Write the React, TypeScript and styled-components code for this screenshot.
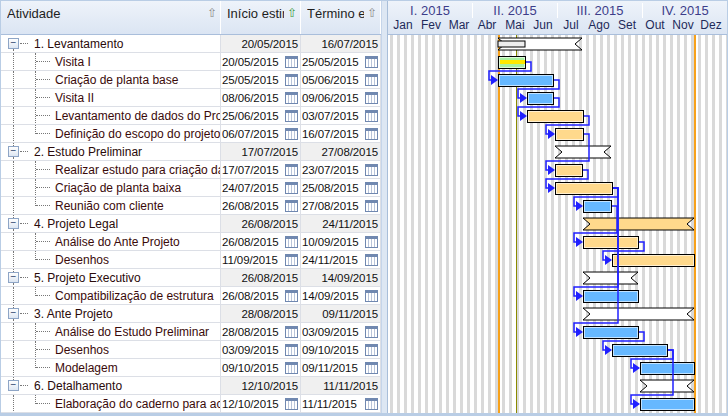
import React from "react";
import styled, { createGlobalStyle } from "styled-components";

const G = createGlobalStyle`
  body { margin: 0; font-family: "Liberation Sans", Arial, sans-serif; background: #fff; }
`;

type Row = { name: string; s: string; e: string; lvl: 0 | 1; last?: boolean; x1: number; x2: number; kind: "sum" | "blue" | "orange" | "green" };

const rows: Row[] = [
  { name: "1. Levantamento", s: "20/05/2015", e: "16/07/2015", lvl: 0, x1: 498, x2: 582, kind: "sum" },
  { name: "Visita I", s: "20/05/2015", e: "25/05/2015", lvl: 1, x1: 498, x2: 525, kind: "green" },
  { name: "Criação de planta base", s: "25/05/2015", e: "05/06/2015", lvl: 1, x1: 498, x2: 553, kind: "blue" },
  { name: "Visita II", s: "08/06/2015", e: "09/06/2015", lvl: 1, x1: 527, x2: 553, kind: "blue" },
  { name: "Levantamento de dados do Projeto", s: "25/06/2015", e: "03/07/2015", lvl: 1, x1: 527, x2: 583, kind: "orange" },
  { name: "Definição do escopo do projeto", s: "06/07/2015", e: "16/07/2015", lvl: 1, last: true, x1: 555, x2: 583, kind: "orange" },
  { name: "2. Estudo Preliminar", s: "17/07/2015", e: "27/08/2015", lvl: 0, x1: 555, x2: 611, kind: "sum" },
  { name: "Realizar estudo para criação da planta", s: "17/07/2015", e: "23/07/2015", lvl: 1, x1: 555, x2: 582, kind: "orange" },
  { name: "Criação de planta baixa", s: "24/07/2015", e: "25/08/2015", lvl: 1, x1: 555, x2: 612, kind: "orange" },
  { name: "Reunião com cliente", s: "26/08/2015", e: "27/08/2015", lvl: 1, last: true, x1: 583, x2: 611, kind: "blue" },
  { name: "4. Projeto Legal", s: "26/08/2015", e: "24/11/2015", lvl: 0, x1: 583, x2: 694, kind: "sum" },
  { name: "Análise do Ante Projeto", s: "26/08/2015", e: "10/09/2015", lvl: 1, x1: 583, x2: 638, kind: "orange" },
  { name: "Desenhos", s: "11/09/2015", e: "24/11/2015", lvl: 1, last: true, x1: 612, x2: 694, kind: "orange" },
  { name: "5. Projeto Executivo", s: "26/08/2015", e: "14/09/2015", lvl: 0, x1: 583, x2: 638, kind: "sum" },
  { name: "Compatibilização de estrutura", s: "26/08/2015", e: "14/09/2015", lvl: 1, last: true, x1: 583, x2: 638, kind: "blue" },
  { name: "3. Ante Projeto", s: "28/08/2015", e: "09/11/2015", lvl: 0, x1: 583, x2: 694, kind: "sum" },
  { name: "Análise do Estudo Preliminar", s: "28/08/2015", e: "03/09/2015", lvl: 1, x1: 583, x2: 638, kind: "blue" },
  { name: "Desenhos", s: "03/09/2015", e: "09/10/2015", lvl: 1, x1: 612, x2: 667, kind: "blue" },
  { name: "Modelagem", s: "09/10/2015", e: "09/11/2015", lvl: 1, last: true, x1: 640, x2: 694, kind: "blue" },
  { name: "6. Detalhamento", s: "12/10/2015", e: "11/11/2015", lvl: 0, x1: 640, x2: 694, kind: "sum" },
  { name: "Elaboração do caderno para acabamentos", s: "12/10/2015", e: "11/11/2015", lvl: 1, last: true, x1: 640, x2: 694, kind: "blue" },
];

const deps: [number, number][] = [
  [1, 2], [2, 3], [3, 4], [4, 5], [5, 7], [7, 8], [8, 9], [9, 11], [11, 12], [8, 14], [8, 16], [16, 17], [17, 18], [17, 20],
];

const RH = 18;
const Frame = styled.div`
  width: 728px; height: 416px; display: flex; box-sizing: border-box;
  border: 1px solid #b9cde5; border-bottom-width: 3px; background: #fff; overflow: hidden;
`;
const Grid = styled.div`width: 380px; display: flex; flex-direction: column; flex-shrink: 0;`;
const Splitter = styled.div`width: 5px; background: #dde7f3; border-left: 1px solid #c5d5ea; border-right: 1px solid #a8bed9; flex-shrink: 0;`;
const Chart = styled.div`flex: 1; display: flex; flex-direction: column; overflow: hidden;`;
const HeadRow = styled.div<{ col?: boolean }>`
  height: 34px; flex-shrink: 0; display: flex; flex-direction: ${p => (p.col ? "column" : "row")};
  background: linear-gradient(#eef3fa, #dbe5f3);
  border-bottom: 1px solid #a9bedb; box-sizing: border-box;
`;
const HeadCell = styled.div<{ w: number }>`
  width: ${p => p.w}px; padding: 5px 3px 0 6px; box-sizing: border-box; font-size: 13px; color: #1e1e1e;
  display: flex; border-right: 1px solid #fff; overflow: hidden; white-space: nowrap;
`;
const HeadText = styled.span`overflow: hidden; flex: 1; min-width: 0;`;
const Arrow = styled.span<{ c: string }>`color: ${p => p.c}; font-size: 12px; line-height: 14px; margin-left: 3px; flex-shrink: 0;`;
const RowBox = styled.div`height: ${RH}px; display: flex; border-bottom: 1px solid #dcdfe6; box-sizing: border-box; font-size: 12px;`;
const NameCell = styled.div`width: 220px; flex-shrink: 0; position: relative; display: flex; align-items: center; border-right: 1px solid #dcdfe6; box-sizing: border-box; overflow: hidden; white-space: nowrap;`;
const NameText = styled.span<{ lvl: number }>`
  padding-left: ${p => (p.lvl ? 54 : 33)}px; color: ${p => (p.lvl ? "#3a0a0a" : "#2a0a0a")};
  overflow: hidden; min-width: 0; flex: 1;
`;
const DateCell = styled.div<{ sum: boolean; w: number }>`
  width: ${p => p.w}px; flex-shrink: 0; display: flex; align-items: center; justify-content: ${p => (p.sum ? "flex-end" : "space-between")};
  padding: 0 2px 0 1px; box-sizing: border-box; background: ${p => (p.sum ? "#f0f0f0" : "#fff")};
  border-right: 1px solid #dcdfe6; color: #111; font-size: 11.5px; letter-spacing: -0.1px; white-space: nowrap; overflow: hidden;
`;
const Cal = styled.span`
  width: 13px; height: 12px; flex-shrink: 0; border: 1px solid #7088b0; box-sizing: border-box; border-top-width: 3px;
  background: repeating-linear-gradient(90deg, #fff 0 2px, #b8c4da 2px 3px), #fff; margin-left: 1px;
`;
const Expander = styled.span`
  position: absolute; left: 7px; top: 3px; width: 11px; height: 11px; border: 1px solid #8ea5c6; box-sizing: border-box;
  background: linear-gradient(#fff, #dde6f2); font-size: 10px; line-height: 8px; text-align: center; color: #2a3f6a;
`;
const HLine = styled.span<{ left: number; w: number }>`
  position: absolute; left: ${p => p.left}px; top: 8px; width: ${p => p.w}px; border-top: 1px dotted #777;
`;
const VLine = styled.span<{ left: number; top: number; h: number }>`
  position: absolute; left: ${p => p.left}px; top: ${p => p.top}px; height: ${p => p.h}px; border-left: 1px dotted #777;
`;
const Quarters = styled.div`display: flex; height: 17px; align-items: flex-end;`;
const Quarter = styled.div`
  width: 84px; text-align: center; font-size: 13px; color: #3d3d8a; border-right: 1px solid #fff; flex-shrink: 0;
`;
const Months = styled.div`display: flex; padding-left: 1px;`;
const Month = styled.div`width: 28px; text-align: center; font-size: 12px; color: #1e2a5a; flex-shrink: 0;`;

const fills: Record<string, string> = { blue: "#66b8ff", orange: "#ffd98c", green: "#a8f0a0" };

function ChartBody() {
  const W = 340, H = 380, ox = 388;
  const lines = [];
  for (let x = 2; x < W; x += 7) lines.push(<rect key={x} x={x} y={0} width={3} height={H} fill="#d9d9d9" />);
  const mid = (i: number) => i * RH + 9;
  return (
    <svg width={W} height={H}>
      {lines}
      <rect x={498 - ox} y={0} width={2} height={H} fill="#f7a11a" />
      <rect x={694 - ox} y={0} width={2} height={H} fill="#f7a11a" />
      <rect x={516 - ox} y={0} width={1} height={H} fill="#8a8a00" />
      {rows.map((r, i) => {
        const x1 = r.x1 - ox, x2 = r.x2 - ox, y = i * RH + 3;
        if (r.kind === "sum") {
          return (
            <g key={i}>
              <polygon points={`${x1},${y} ${x2},${y} ${x2 - 7},${y + 6} ${x2},${y + 12} ${x1},${y + 12} ${x1 + 7},${y + 6}`} fill={i === 10 ? "#ffd98c" : "#fff"} stroke="#000" />
              {i === 0 && <rect x={x1} y={y + 3} width={27} height={6} fill="#eee" stroke="#000" />}
            </g>
          );
        }
        return (
          <g key={i}>
            <rect x={x1 + 0.5} y={y + 0.5} width={x2 - x1} height={12} fill={fills[r.kind]} stroke="#000" />
            <rect x={x1 + 1.5} y={y + 1.5} width={x2 - x1 - 2} height={10} fill="none" stroke="#fff" strokeOpacity={0.6} />
            {r.kind === "green" && <rect x={x1 + 2} y={y + 4} width={x2 - x1 - 2} height={4} fill="#ffe800" />}
          </g>
        );
      })}
      {deps.map(([a, b], k) => {
        const A = rows[a], B = rows[b];
        const ex = A.x2 - ox + 1, sx = B.x1 - ox;
        const ya = mid(a), yb = mid(b);
        const turnY = yb - 9;
        const d = `M${ex},${ya} H${ex + 5} V${turnY} H${sx - 9} V${yb} H${sx - 6}`;
        return (
          <g key={k}>
            <path d={d} fill="none" stroke="#2020ff" strokeWidth={1.5} />
            <polygon points={`${sx - 7},${yb - 5} ${sx},${yb} ${sx - 7},${yb + 5}`} fill="#2020ff" />
          </g>
        );
      })}
    </svg>
  );
}

export default function App() {
  return (
    <>
      <G />
      <Frame>
        <Grid>
          <HeadRow>
            <HeadCell w={220}><HeadText>Atividade</HeadText><Arrow c="#888">⇧</Arrow></HeadCell>
            <HeadCell w={80}><HeadText>Início estimado</HeadText><Arrow c="#3a9a3a">⇧</Arrow></HeadCell>
            <HeadCell w={80}><HeadText>Término estimado</HeadText><Arrow c="#888">⇧</Arrow></HeadCell>
          </HeadRow>
          {rows.map((r, i) => {
            const sum = r.lvl === 0;
            return (
              <RowBox key={i}>
                <NameCell>
                  {i !== 0 && <VLine left={12} top={0} h={sum ? 3 : RH} />}
                  {sum && i !== 19 && <VLine left={12} top={14} h={4} />}
                  {sum ? (
                    <>
                      <Expander>−</Expander>
                      <HLine left={19} w={8} />
                    </>
                  ) : (
                    <>
                      <VLine left={34} top={0} h={r.last ? 9 : RH} />
                      <HLine left={35} w={14} />
                    </>
                  )}
                  <NameText lvl={r.lvl}>{r.name}</NameText>
                </NameCell>
                <DateCell sum={sum} w={80}>{r.s}{!sum && <Cal />}</DateCell>
                <DateCell sum={sum} w={80}>{r.e}{!sum && <Cal />}</DateCell>
              </RowBox>
            );
          })}
        </Grid>
        <Splitter />
        <Chart>
          <HeadRow col>
            <Quarters>
              {["I. 2015", "II. 2015", "III. 2015", "IV. 2015"].map(q => <Quarter key={q}>{q}</Quarter>)}
            </Quarters>
            <Months>
              {["Jan", "Fev", "Mar", "Abr", "Mai", "Jun", "Jul", "Ago", "Set", "Out", "Nov", "Dez"].map(m => <Month key={m}>{m}</Month>)}
            </Months>
          </HeadRow>
          <ChartBody />
        </Chart>
      </Frame>
    </>
  );
}
